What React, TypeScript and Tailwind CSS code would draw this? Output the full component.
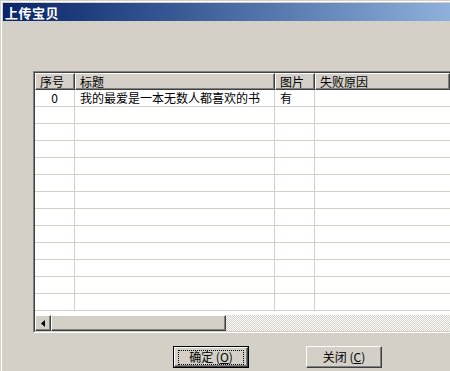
import React from 'react';

const font = "font-['SimSun','Noto_Sans_CJK_SC',sans-serif]";

const columns = [
  { label: '序号', width: 'w-[40px]' },
  { label: '标题', width: 'w-[200px]' },
  { label: '图片', width: 'w-[40px]' },
  { label: '失败原因', width: 'flex-1' },
];

const rows = [{ id: '0', title: '我的最爱是一本无数人都喜欢的书', pic: '有', reason: '' }];

const raised =
  'border-t border-l border-white border-r border-b border-r-[#404040] border-b-[#404040] shadow-[inset_-1px_-1px_0_#808080]';

const App = () => {
  const bodyRows = Array.from({ length: 13 }, (_, i) => rows[i]);

  return (
    <div className={`w-[450px] h-[371px] overflow-hidden bg-[#d4d0c8] text-[12px] leading-none text-black ${font}`}>
      {/* window frame */}
      <div className="h-full border-t border-l border-[#d4d0c8]">
        <div className="h-full border-t border-l border-white pt-px pl-px">
          {/* title bar */}
          <div className="h-[18px] flex items-center pl-[2px] bg-gradient-to-r from-[#0a246a] to-[#8fb0db]">
            <span className="text-white font-bold text-[13px] tracking-[0.5px]">上传宝贝</span>
          </div>

          {/* list view */}
          <div className="mt-[50px] ml-[30px] border-t border-l border-[#808080] border-b border-b-white">
            <div className="border-t border-l border-[#404040] border-b border-b-[#d4d0c8]">
              {/* header */}
              <div className="flex h-[17px]">
                {columns.map((c) => (
                  <div key={c.label} className={`${c.width} ${raised} flex items-center pl-[4px] whitespace-nowrap`}>
                    {c.label}
                  </div>
                ))}
              </div>
              {/* body */}
              <div className="bg-white h-[225px]">
                {bodyRows.map((r, i) => (
                  <div key={i} className="flex h-[17px] border-b border-[#d4d0c8]">
                    <div className="w-[40px] border-r border-[#d4d0c8] flex items-center justify-center">
                      {r?.id}
                    </div>
                    <div className="w-[200px] border-r border-[#d4d0c8] flex items-center pl-[5px] whitespace-nowrap">
                      {r?.title}
                    </div>
                    <div className="w-[40px] border-r border-[#d4d0c8] flex items-center pl-[5px]">{r?.pic}</div>
                    <div className="flex-1 flex items-center pl-[5px]">{r?.reason}</div>
                  </div>
                ))}
              </div>
              {/* horizontal scrollbar */}
              <div className="flex h-[16px] bg-[image:repeating-conic-gradient(#d4d0c8_0_25%,#ffffff_0_50%)] bg-[length:2px_2px]">
                <div className={`w-[16px] h-[16px] bg-[#d4d0c8] ${raised} flex items-center justify-center`}>
                  <svg width="4" height="7" viewBox="0 0 4 7">
                    <path d="M4 0V7L0 3.5Z" fill="#000" />
                  </svg>
                </div>
                <div className={`w-[175px] h-[16px] bg-[#d4d0c8] ${raised}`} />
              </div>
            </div>
          </div>

          {/* buttons */}
          <div className="flex mt-[13px] pl-[170px] gap-[57px]">
            <div className="w-[76px] h-[22px] border border-black">
              <div className={`h-full bg-[#d4d0c8] ${raised} flex items-center justify-center`}>
                <div className="w-[66px] h-[15px] border border-dotted border-black flex items-center justify-center">
                  确定&nbsp;(<u>O</u>)
                </div>
              </div>
            </div>
            <div className={`w-[76px] h-[22px] bg-[#d4d0c8] ${raised} flex items-center justify-center`}>
              关闭&nbsp;(<u>C</u>)
            </div>
          </div>
        </div>
      </div>
    </div>
  );
};

export default App;
